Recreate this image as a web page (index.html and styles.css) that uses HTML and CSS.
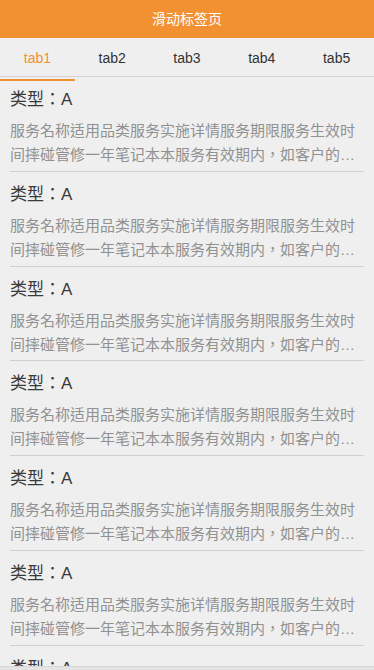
FILE: index.html
```html
<!DOCTYPE html>
<html lang="zh-TW">
<head>
<meta charset="utf-8">
<meta name="viewport" content="width=device-width, initial-scale=1">
<title>滑动标签页</title>
<link rel="stylesheet" href="styles.css">
</head>
<body>
<div class="page">
  <header class="header">滑动标签页</header>
  <nav class="tabs">
    <div class="tab active">tab1</div>
    <div class="tab">tab2</div>
    <div class="tab">tab3</div>
    <div class="tab">tab4</div>
    <div class="tab">tab5</div>
  </nav>
  <main class="list">
    <div class="item">
      <div class="title">类型：A</div>
      <div class="desc">服务名称适用品类服务实施详情服务期限服务生效时间摔碰管修一年笔记本本服务有效期内，如客户的笔记本在使用过程中出现意外摔碰</div>
    </div>
    <div class="item">
      <div class="title">类型：A</div>
      <div class="desc">服务名称适用品类服务实施详情服务期限服务生效时间摔碰管修一年笔记本本服务有效期内，如客户的笔记本在使用过程中出现意外摔碰</div>
    </div>
    <div class="item">
      <div class="title">类型：A</div>
      <div class="desc">服务名称适用品类服务实施详情服务期限服务生效时间摔碰管修一年笔记本本服务有效期内，如客户的笔记本在使用过程中出现意外摔碰</div>
    </div>
    <div class="item">
      <div class="title">类型：A</div>
      <div class="desc">服务名称适用品类服务实施详情服务期限服务生效时间摔碰管修一年笔记本本服务有效期内，如客户的笔记本在使用过程中出现意外摔碰</div>
    </div>
    <div class="item">
      <div class="title">类型：A</div>
      <div class="desc">服务名称适用品类服务实施详情服务期限服务生效时间摔碰管修一年笔记本本服务有效期内，如客户的笔记本在使用过程中出现意外摔碰</div>
    </div>
    <div class="item">
      <div class="title">类型：A</div>
      <div class="desc">服务名称适用品类服务实施详情服务期限服务生效时间摔碰管修一年笔记本本服务有效期内，如客户的笔记本在使用过程中出现意外摔碰</div>
    </div>
    <div class="item">
      <div class="title">类型：A</div>
      <div class="desc">服务名称适用品类服务实施详情服务期限服务生效时间摔碰管修一年笔记本本服务有效期内，如客户的笔记本在使用过程中出现意外摔碰</div>
    </div>
  </main>
  <div class="bottom-bar"></div>
</div>
</body>
</html>
```

FILE: styles.css
```css
html, body {
  margin: 0;
  padding: 0;
  height: 100%;
  overflow: hidden;
  background: #efefef;
  font-family: "Liberation Sans", "Noto Sans CJK TC", "Noto Sans CJK SC", sans-serif;
}

.page {
  display: flex;
  flex-direction: column;
  height: 100%;
  overflow: hidden;
}

.header {
  flex: none;
  height: 38px;
  line-height: 38px;
  background: #f29131;
  color: #fff;
  font-size: 14px;
  text-align: center;
}

.tabs {
  flex: none;
  display: grid;
  grid-template-columns: repeat(5, 1fr);
  height: 38px;
  border-bottom: 1px solid #d2d2d2;
  background: #efefef;
}

.tab {
  position: relative;
  text-align: center;
  font-size: 14px;
  line-height: 41px;
  color: #333;
}

.tab.active {
  color: #f29131;
}

.tab.active::after {
  content: "";
  position: absolute;
  left: 0;
  right: 0;
  bottom: -1.5px;
  height: 2px;
  background: #f29131;
}

.list {
  flex: 1;
  overflow: hidden;
}

.item {
  margin: 0 10px;
  padding: 8px 0 3.8px;
  border-bottom: 1px solid #d0d0d0;
}

.title {
  font-size: 17px;
  line-height: 30px;
  color: #3a3a3a;
}

.desc {
  margin-top: 4px;
  font-size: 15px;
  line-height: 24px;
  color: #919191;
  display: -webkit-box;
  -webkit-box-orient: vertical;
  -webkit-line-clamp: 2;
  overflow: hidden;
}

.bottom-bar {
  position: fixed;
  left: 0;
  right: 0;
  bottom: 0;
  height: 3px;
  background: #e4e4e4;
  border-top: 1px solid #d6d6d6;
}
```
